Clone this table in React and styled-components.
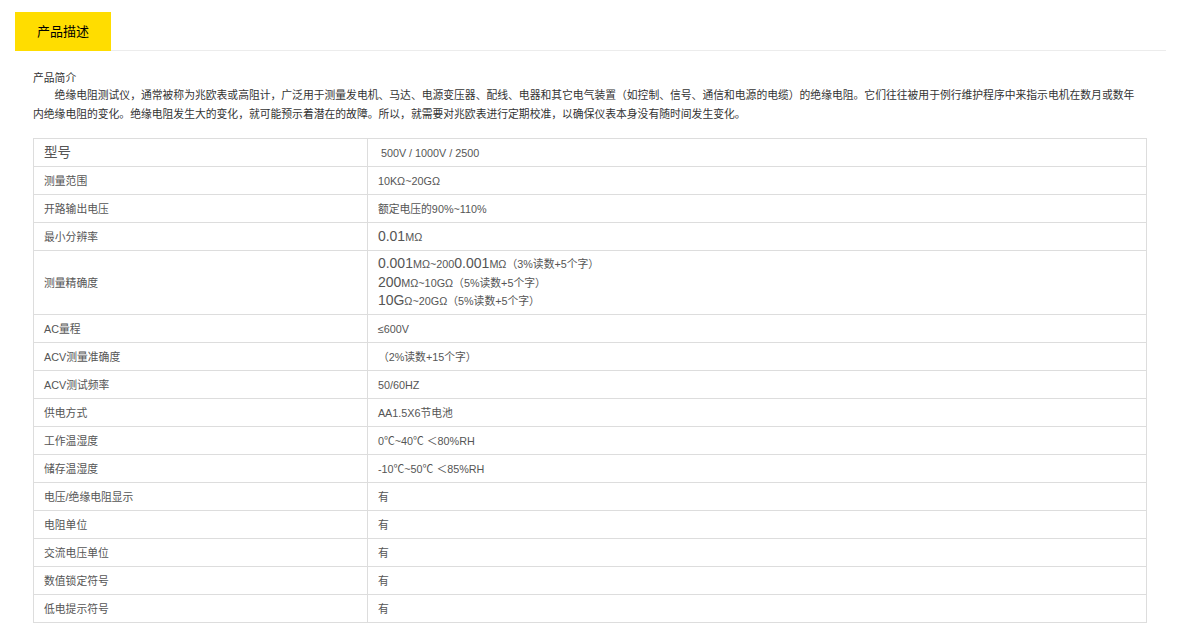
import styled, { createGlobalStyle } from 'styled-components';

const GlobalStyle = createGlobalStyle`
	html, body
	{
		margin: 0;
		padding: 0;
		background: #fff;
	}

	body
	{
		font-family: "Liberation Sans", "Noto Sans CJK SC", sans-serif;
	}
`;

const Page = styled.div`
	width: 1151px;
	padding: 12px 0 0 15px;
`;

const TabBar = styled.div`
	display: flex;
	border-bottom: 1px solid #ececec;
`;

const Tab = styled.div`
	width: 96px;
	height: 37px;
	padding-bottom: 2px;
	display: flex;
	align-items: center;
	justify-content: center;
	background: ${props => props.active ? '#ffdd00' : 'transparent'};
	color: #000;
	font-size: 13px;
	margin-bottom: -1px;
`;

const Content = styled.div`
	padding: 19px 19px 0 18px;
`;

const Heading = styled.div`
	font-size: 10.8px;
	line-height: 16px;
	color: #333;
`;

const Intro = styled.p`
	margin: 0 0 14px;
	max-width: 1106px;
	font-size: 10.8px;
	line-height: 19px;
	color: #333;
	text-indent: 2em;
`;

const SpecTable = styled.table`
	width: 100%;
	border-collapse: collapse;
	color: #555;
	font-size: 10.8px;

	td
	{
		height: 27px;
		padding: 0 10px;
		border: 1px solid #ddd;
		vertical-align: middle;
		line-height: 16px;
	}

	td:first-child
	{
		width: 30%;
	}
`;

const MultiCell = styled.td`
	&&
	{
		height: 56px;
		padding: 4px 10px 3px;
	}
`;

const Line = styled.div`
	height: 18.7px;
	line-height: 18.7px;
`;

const Big = styled.span`
	font-size: ${props => props.size || 14}px;
	line-height: 1;
`;

const Spaced = styled.span`
	padding-left: 3px;
`;

const specs = [
	{ label: <Big size={13.5}>型号</Big>, value: <Spaced>500V / 1000V / 2500</Spaced> },
	{ label: '测量范围', value: '10KΩ~20GΩ' },
	{ label: '开路输出电压', value: '额定电压的90%~110%' },
	{ label: '最小分辨率', value: <><Big>0.01</Big>MΩ</> },
	{
		label: '测量精确度',
		multi: true,
		value: (
			<>
				<Line><Big>0.001</Big>MΩ~200<Big>0.001</Big>MΩ（3%读数+5个字）</Line>
				<Line><Big>200</Big>MΩ~10GΩ（5%读数+5个字）</Line>
				<Line><Big>10G</Big>Ω~20GΩ（5%读数+5个字）</Line>
			</>
		)
	},
	{ label: 'AC量程', value: '≤600V' },
	{ label: 'ACV测量准确度', value: '（2%读数+15个字）' },
	{ label: 'ACV测试频率', value: '50/60HZ' },
	{ label: '供电方式', value: 'AA1.5X6节电池' },
	{ label: '工作温湿度', value: '0℃~40℃ ＜80%RH' },
	{ label: '储存温湿度', value: '-10℃~50℃ ＜85%RH' },
	{ label: '电压/绝缘电阻显示', value: '有' },
	{ label: '电阻单位', value: '有' },
	{ label: '交流电压单位', value: '有' },
	{ label: '数值锁定符号', value: '有' },
	{ label: '低电提示符号', value: '有' }
];

const App = () => {
	return (
		<Page>
			<GlobalStyle />
			<TabBar>
				<Tab active>产品描述</Tab>
			</TabBar>
			<Content>
				<Heading>产品简介</Heading>
				<Intro>
					绝缘电阻测试仪，通常被称为兆欧表或高阻计，广泛用于测量发电机、马达、电源变压器、配线、电器和其它电气装置（如控制、信号、通信和电源的电缆）的绝缘电阻。它们往往被用于例行维护程序中来指示电机在数月或数年内绝缘电阻的变化。绝缘电阻发生大的变化，就可能预示着潜在的故障。所以，就需要对兆欧表进行定期校准，以确保仪表本身没有随时间发生变化。
				</Intro>
				<SpecTable>
					<tbody>
						{specs.map((row, index) => (
							<tr key={index}>
								<td>{row.label}</td>
								{row.multi ? (
									<MultiCell>{row.value}</MultiCell>
								) : (
									<td>{row.value}</td>
								)}
							</tr>
						))}
					</tbody>
				</SpecTable>
			</Content>
		</Page>
	);
};

export default App;
